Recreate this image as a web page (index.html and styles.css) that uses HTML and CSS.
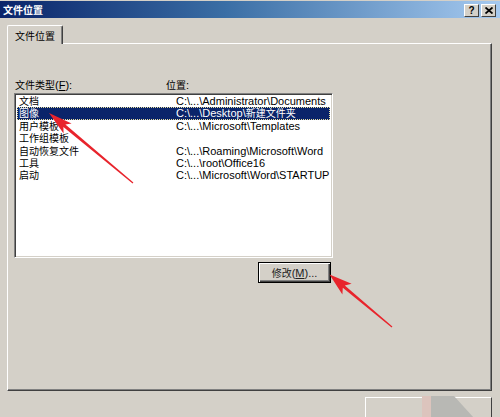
FILE: index.html
```html
<!DOCTYPE html>
<html lang="zh-CN">
<head>
<meta charset="utf-8">
<title>文件位置</title>
<link rel="stylesheet" href="styles.css">
</head>
<body>
<div class="window">
  <div class="titlebar">
    <span class="title"><span class="cj">文件位置</span></span>
    <div class="tbtns">
      <span class="tbtn q">?</span>
      <span class="tbtn"><svg width="8" height="7" viewBox="0 0 8 7"><path d="M0.5 0.5 L7.5 6.5 M7.5 0.5 L0.5 6.5" stroke="#000" stroke-width="1.8"/></svg></span>
    </div>
  </div>
  <div class="content">
    <div class="tab"><span class="cj">文件位置</span></div>
    <div class="panel">
      <div class="labels">
        <span><span class="cj">文件类型</span>(<u>F</u>):</span>
        <span><span class="cj">位置</span>:</span>
      </div>
      <div class="listbox">
        <div class="row"><span class="c1 cj">文档</span><span class="c2">C:\...\Administrator\Documents</span></div>
        <div class="row sel"><span class="c1 cj">图像</span><span class="c2">C:\...\Desktop\<span class="cj">新建文件夹</span></span></div>
        <div class="row"><span class="c1 cj">用户模板</span><span class="c2">C:\...\Microsoft\Templates</span></div>
        <div class="row"><span class="c1 cj">工作组模板</span><span class="c2"></span></div>
        <div class="row"><span class="c1 cj">自动恢复文件</span><span class="c2">C:\...\Roaming\Microsoft\Word</span></div>
        <div class="row"><span class="c1 cj">工具</span><span class="c2">C:\...\root\Office16</span></div>
        <div class="row"><span class="c1 cj">启动</span><span class="c2">C:\...\Microsoft\Word\STARTUP</span></div>
      </div>
      <div class="btnrow">
        <button class="btn"><span class="cj">修改</span>(<u>M</u>)...</button>
      </div>
    </div>
    <div class="bottom">
      <div class="partial-btn">
        <svg class="ghost" width="127" height="22" viewBox="0 0 127 22"><rect x="56" y="0" width="9" height="22" fill="#dcc4bd"/><polygon points="65,0 88,0 108,22 65,22" fill="#b8b8b4"/></svg>
      </div>
    </div>
  </div>
  <svg class="arrows" width="500" height="417" viewBox="0 0 500 417">
    <polygon fill="#e8242c" points="49,113 63.6,133.5 63.4,127 132.6,183.5 133.4,182.5 65.4,124.6 71.6,123.5"/>
    <polygon fill="#e8242c" points="329.5,274.5 342.4,294.6 342.8,287.7 391.6,327.5 392.4,326.5 344.8,285.4 351.6,283.8"/>
  </svg>
</div>
</body>
</html>
```
FILE: styles.css
```css
html, body {
  margin: 0;
  padding: 0;
}
body {
  background: #d4d0c8;
  font-family: "Liberation Sans", "Noto Sans CJK SC", sans-serif;
  font-size: 11px;
  color: #000;
}
.window {
  position: relative;
  width: 500px;
  height: 417px;
  overflow: hidden;
  background: #d4d0c8;
}
.cj {
  font-family: "Noto Sans CJK SC", sans-serif;
  font-size: 10px;
}
.titlebar {
  margin-top: 1px;
  height: 17px;
  background: linear-gradient(to right, #0a246a 0%, #3a6ea5 45%, #a6caf0 100%);
  display: flex;
  align-items: center;
  justify-content: space-between;
  padding: 0 4px 0 3px;
}
.title {
  color: #fff;
  font-weight: bold;
  line-height: 17px;
}
.tbtns {
  display: flex;
  gap: 2px;
  margin-top: 1px;
}
.tbtn {
  box-sizing: border-box;
  width: 15px;
  height: 13px;
  background: #d4d0c8;
  border: 1px solid;
  border-color: #fff #404040 #404040 #fff;
  display: flex;
  align-items: center;
  justify-content: center;
}
.tbtn.q {
  font-weight: bold;
  font-size: 10px;
  line-height: 11px;
}
.content {
  padding: 7px 8px 0 7px;
}
.tab {
  position: relative;
  z-index: 1;
  box-sizing: border-box;
  width: 56px;
  height: 19px;
  margin-bottom: -1px;
  background: #d4d0c8;
  border-top: 1px solid #fff;
  border-left: 1px solid #fff;
  border-right: 1px solid #404040;
  border-radius: 2px 2px 0 0;
  box-shadow: inset -1px 0 #808080;
  padding: 3px 0 0 7px;
  line-height: 13px;
}
.panel {
  box-sizing: border-box;
  height: 348px;
  border-top: 1px solid #fff;
  border-left: 1px solid #fff;
  border-right: 1px solid #404040;
  border-bottom: 1px solid #404040;
  box-shadow: inset -1px -1px #808080;
  padding: 34px 0 0 6px;
}
.labels {
  display: grid;
  grid-template-columns: 151px auto;
  padding-left: 1px;
  height: 13px;
  line-height: 13px;
}
.listbox {
  box-sizing: border-box;
  margin-top: 2px;
  width: 319px;
  height: 165px;
  background: #fff;
  border: 1px solid;
  border-color: #808080 #fff #fff #808080;
  box-shadow: inset 1px 1px #404040, inset -1px -1px #d4d0c8;
  padding: 1px 2px 0 2px;
}
.row {
  display: grid;
  grid-template-columns: 157px auto;
  height: 12.4px;
  line-height: 12.4px;
  padding-left: 2px;
  white-space: nowrap;
  box-sizing: border-box;
}
.row.sel {
  background: #0a246a;
  color: #fff;
  outline: 1px dotted #e8e0a0;
  outline-offset: -1px;
}
.btnrow {
  width: 319px;
  display: flex;
  justify-content: flex-end;
  padding-top: 4px;
}
.btn {
  box-sizing: border-box;
  width: 73px;
  height: 21px;
  margin-right: 2px;
  background: #d4d0c8;
  border: 1px solid #000;
  box-shadow: inset 1px 1px #fff, inset -1px -1px #404040, inset -2px -2px #808080;
  font-family: "Liberation Sans", "Noto Sans CJK SC", sans-serif;
  font-size: 11px;
  color: #222;
  padding: 0;
  line-height: 19px;
}
.bottom {
  padding: 6px 0 0 358px;
}
.partial-btn {
  box-sizing: border-box;
  width: 127px;
  height: 30px;
  border-top: 1px solid #fff;
  border-left: 1px solid #fff;
  border-right: 1px solid #404040;
}
.ghost {
  display: block;
  margin-top: -2px;
}
.arrows {
  position: absolute;
  left: 0;
  top: 0;
  pointer-events: none;
}
```
